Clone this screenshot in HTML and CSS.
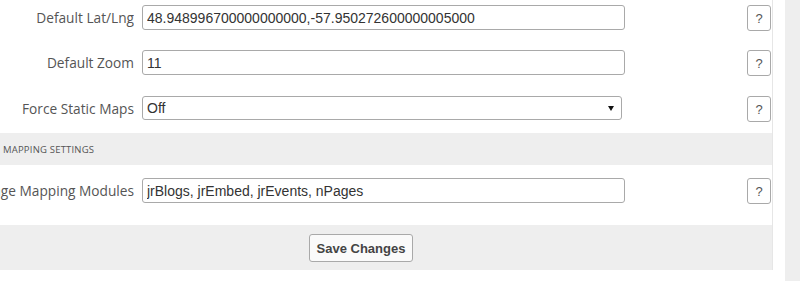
FILE: index.html
```html
<!DOCTYPE html>
<html lang="en">
<head>
  <meta charset="UTF-8" />
  <meta name="viewport" content="width=device-width, initial-scale=1.0"/>
  <title>Mapping Settings</title>
  <link rel="stylesheet" href="styles.css">
</head>
<body>

  <div class="page">
    <div class="panel">

      <div class="row first">
        <label class="label" for="latlng"><span>Default Lat/Lng</span></label>
        <input class="field" type="text" id="latlng" value="48.948996700000000000,-57.950272600000005000">
        <button class="help" type="button">?</button>
      </div>

      <div class="row">
        <label class="label" for="zoom"><span>Default Zoom</span></label>
        <input class="field" type="text" id="zoom" value="11">
        <button class="help" type="button">?</button>
      </div>

      <div class="row select-row">
        <label class="label" for="static"><span>Force Static Maps</span></label>
        <div class="select-wrap">
          <select class="field select" id="static">
            <option>Off</option>
            <option>On</option>
          </select>
        </div>
        <button class="help" type="button">?</button>
      </div>

      <div class="section-title">Mapping Settings</div>

      <div class="row last">
        <label class="label" for="modules"><span>Page Mapping Modules</span></label>
        <input class="field" type="text" id="modules" value="jrBlogs, jrEmbed, jrEvents, nPages">
        <button class="help" type="button">?</button>
      </div>

      <div class="form-footer">
        <button class="save" type="button">Save Changes</button>
      </div>

    </div>
    <div class="gutter"></div>
    <div class="side"></div>
  </div>

</body>
</html>
```

FILE: styles.css
```css
* {
  margin: 0;
  padding: 0;
  box-sizing: border-box;
}

body {
  background: #fff;
  font-family: 'Open Sans', sans-serif;
  font-size: 13px;
  color: #555;
  overflow: hidden;
}

.page {
  display: flex;
  height: 281px;
}

/* panel is scrolled sideways a little, like the shot */
.panel {
  flex: none;
  width: 823px;
  margin-left: -50px;
  align-self: flex-start;
  border-right: 1px solid #e6e6e6;
}

.gutter {
  flex: none;
  width: 12px;
}

.side {
  flex: 1;
  background-color: #eeeeee;
}

.row {
  display: flex;
  align-items: flex-start;
  height: 45px;
  padding: 10px 1px 0 0;
}

.row.first {
  height: 40px;
  padding-top: 5px;
}

.row.select-row {
  height: 48px;
  padding-top: 11px;
}

.row.last {
  height: 60px;
  padding-top: 13px;
}

.label {
  flex: none;
  width: 184px;
  height: 25px;
  margin-right: 8px;
  display: flex;
  align-items: center;
  justify-content: flex-end;
  overflow: hidden;
  white-space: nowrap;
  font-size: 13.7px;
  color: #555;
}

.field {
  width: 483px;
  height: 25px;
  padding: 0 4px;
  border: 1px solid #a9a9a9;
  border-radius: 3px;
  background: #fff;
  font-family: 'Liberation Sans', Arial, sans-serif;
  font-size: 14px;
  color: #333;
}

.select-wrap {
  position: relative;
  width: 480px;
}

.select {
  width: 100%;
  height: 24px;
  appearance: none;
  -webkit-appearance: none;
}

.select-wrap::after {
  content: "";
  position: absolute;
  right: 8px;
  top: 10px;
  border-left: 3px solid transparent;
  border-right: 3px solid transparent;
  border-top: 5px solid #111;
  pointer-events: none;
}

.help {
  margin-left: auto;
  width: 24px;
  height: 26px;
  border: 1px solid #a9a9a9;
  border-radius: 3px;
  background: #fff;
  font-family: 'Liberation Sans', Arial, sans-serif;
  font-size: 13px;
  color: #555;
  cursor: pointer;
}

.section-title {
  height: 32px;
  padding-left: 53px;
  display: flex;
  align-items: center;
  background-color: #eeeeee;
  font-size: 9.5px;
  text-transform: uppercase;
  letter-spacing: 0.2px;
  color: #555;
}

.form-footer {
  background-color: #eeeeee;
  padding-top: 9px;
  text-align: center;
  height: 45px;
}

.save {
  height: 28px;
  padding: 0 7px;
  border: 1px solid #a9a9a9;
  border-radius: 3px;
  background: #fafafa;
  font-family: 'Liberation Sans', Arial, sans-serif;
  font-size: 13px;
  font-weight: bold;
  color: #444;
  cursor: pointer;
}
```
